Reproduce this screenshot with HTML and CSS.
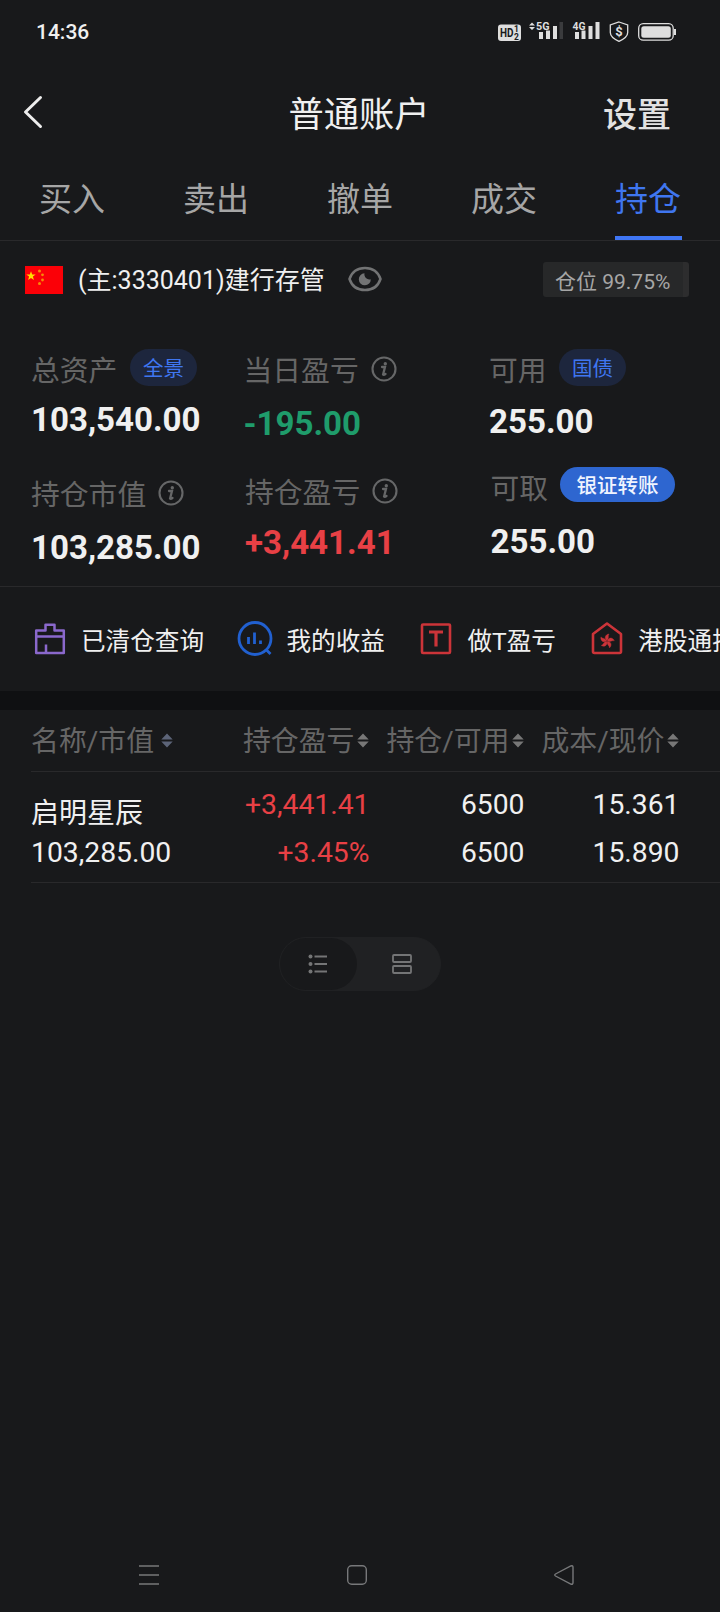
FILE: index.html
```html
<!DOCTYPE html>
<html lang="zh-CN">
<head>
<meta charset="utf-8">
<title>普通账户</title>
<link rel="stylesheet" href="styles.css">
</head>
<body>
<div class="screen">
  <div class="status">
    <span class="time">14:36</span>
    <svg class="status-icons" width="180" height="24" viewBox="0 0 180 24">
      <rect x="0" y="4.5" width="23" height="16.5" rx="3" fill="#dedede"/>
      <text class="hd" x="2" y="17.3" textLength="13.5" lengthAdjust="spacingAndGlyphs">HD</text>
      <text class="hd-sub" x="16" y="12.2">1</text>
      <text class="hd-sub" x="16" y="20">2</text>
      <path d="M31 5.4l3-3 3 3zM31 7l3 3 3-3z" fill="#dedede"/>
      <text class="net" x="38" y="9.6" textLength="13.5" lengthAdjust="spacingAndGlyphs">5G</text>
      <path d="M41 12h4v7h-4zM48 10.5h4v8.500h-4zM55 6h4v13h-4z" fill="#dedede"/>
      <path d="M61.500 2h3.500v17h-3.500z" fill="#3a3b3d"/>
      <text class="net" x="74.500" y="9.600" textLength="13" lengthAdjust="spacingAndGlyphs">4G</text>
      <path d="M77 12h4v7h-4zM83.500 10.500h4v8.500h-4zM90.500 6h4v13h-4zM97.500 2h4v17h-4z" fill="#dedede"/>
      <path d="M121 2l8.700 3v7.500c0 4-4.200 6.800-8.700 8.800c-4.500-2-8.700-4.800-8.700-8.800V5z" fill="none" stroke="#dedede" stroke-width="1.300"/>
      <text class="shield-sign" x="121" y="16" text-anchor="middle">$</text>
      <rect x="140.700" y="3.700" width="34.500" height="16.500" rx="4.500" fill="none" stroke="#dedede" stroke-width="1.300"/>
      <rect x="143.300" y="6.300" width="29.500" height="11.400" rx="2.500" fill="#dedede"/>
      <path d="M176 9h2v6h-2z" fill="#dedede"/>
    </svg>
  </div>

  <header class="topbar">
    <svg class="back" width="20" height="34" viewBox="0 0 20 34"><path d="M17.500 2.500L2.500 17L17.500 31.500" fill="none" stroke="#ededed" stroke-width="3" stroke-linecap="round" stroke-linejoin="round"/></svg>
    <h1 class="title">普通账户</h1>
    <span class="settings">设置</span>
  </header>

  <nav class="tabs">
    <div class="tab"><span>买入</span></div>
    <div class="tab"><span>卖出</span></div>
    <div class="tab"><span>撤单</span></div>
    <div class="tab"><span>成交</span></div>
    <div class="tab active"><span>持仓</span></div>
  </nav>

  <div class="account">
    <svg width="38" height="28" viewBox="0 0 38 28">
      <rect width="38" height="28" fill="#fb0007"/>
      <path d="M6 5.200l1.200 3.300h3.500l-2.800 2.100 1 3.400L6 12l-2.900 2 1-3.400L1.300 8.500h3.500z" fill="#ffde00"/>
      <g fill="#f78a08"><circle cx="14.500" cy="5" r="1.500"/><circle cx="17.500" cy="8.800" r="1.400"/><circle cx="17.500" cy="14" r="1.400"/><circle cx="14.500" cy="17.500" r="1.500"/></g>
    </svg>
    <span class="account-name">(主:3330401)建行存管</span>
    <svg class="eye" width="34" height="26" viewBox="0 0 34 26">
      <path d="M1.500 13C4 5.500 10 2 17 2s13 3.500 15.500 11C30 20.500 24 24 17 24S4 20.500 1.500 13z" fill="none" stroke="#727374" stroke-width="2.500"/>
      <path d="M16.500 7.300a5 5 0 0 0 6.300 5.900a6 6 0 1 1-6.300-5.900z" fill="#727374"/>
    </svg>
    <span class="position">仓位 99.75%</span>
  </div>

  <section class="summary">
    <div class="col col-a">
      <div class="label">总资产<span class="pill">全景</span></div>
      <div class="value">103,540.00</div>
      <div class="label">持仓市值<svg class="info" viewBox="0 0 26 26"><use href="#info"/></svg></div>
      <div class="value">103,285.00</div>
    </div>
    <div class="col col-b">
      <div class="label">当日盈亏<svg class="info" viewBox="0 0 26 26"><use href="#info"/></svg></div>
      <div class="value green">-195.00</div>
      <div class="label inset">持仓盈亏<svg class="info" viewBox="0 0 26 26"><use href="#info"/></svg></div>
      <div class="value red inset">+3,441.41</div>
    </div>
    <div class="col col-c">
      <div class="label">可用<span class="pill">国债</span></div>
      <div class="value">255.00</div>
      <div class="label inset">可取<span class="pill solid">银证转账</span></div>
      <div class="value inset">255.00</div>
    </div>
  </section>

  <section class="shortcuts">
    <div class="shortcut">
      <svg width="36" height="36" viewBox="0 0 36 36" fill="none" stroke="#8a68cc" stroke-width="2.500" stroke-linejoin="round"><path d="M4.200 9.500H13.500V3.700H22.500V9.500H31.800V32H4.200zM4.200 15.500H31.800M14 32V23.500"/></svg>
      <span>已清仓查询</span>
    </div>
    <div class="shortcut">
      <svg width="36" height="36" viewBox="0 0 36 36" fill="none" stroke="#2160d0" stroke-width="2.800"><circle cx="18" cy="17.500" r="16"/><path d="M29 28.500l4.500 4.500M11.500 16V23M17.500 11.500V23M23.500 19.500V23"/></svg>
      <span>我的收益</span>
    </div>
    <div class="shortcut">
      <svg width="36" height="36" viewBox="0 0 36 36" fill="none" stroke="#cc3439" stroke-width="2.600"><rect x="4" y="3.500" width="28" height="28.500" rx="1"/><path d="M11 11H25M18 11V25.500" stroke-width="3.200"/></svg>
      <span>做T盈亏</span>
    </div>
    <div class="shortcut">
      <svg width="36" height="36" viewBox="0 0 36 36"><path d="M18 2.500L32 13V30.500a1.500 1.500 0 0 1-1.500 1.500H5.500a1.500 1.500 0 0 1-1.500-1.500V13z" fill="none" stroke="#cc3439" stroke-width="2.600" stroke-linejoin="round"/>
        <g fill="#cc3439" stroke="#cc3439" stroke-width=".4" transform="translate(18 20)"><path id="petal" d="M0-.500C-3-2.500-2-6.500 2-7C.500-5 2.500-3 0-.500z"/><use href="#petal" transform="rotate(72)"/><use href="#petal" transform="rotate(144)"/><use href="#petal" transform="rotate(216)"/><use href="#petal" transform="rotate(288)"/></g></svg>
      <span>港股通持仓</span>
    </div>
  </section>

  <section class="holdings">
    <div class="row head">
      <div class="cell first">名称/市值<svg class="sort" viewBox="0 0 12 15"><use href="#sort"/></svg></div>
      <div class="cell">持仓盈亏<svg class="sort" viewBox="0 0 12 15"><use href="#sort"/></svg></div>
      <div class="cell">持仓/可用<svg class="sort" viewBox="0 0 12 15"><use href="#sort"/></svg></div>
      <div class="cell">成本/现价<svg class="sort" viewBox="0 0 12 15"><use href="#sort"/></svg></div>
    </div>
    <div class="row body">
      <div class="cell first"><span class="name">启明星辰</span><span>103,285.00</span></div>
      <div class="cell red"><span>+3,441.41</span><span>+3.45%</span></div>
      <div class="cell"><span>6500</span><span>6500</span></div>
      <div class="cell"><span>15.361</span><span>15.890</span></div>
    </div>
  </section>

  <div class="switch">
    <div class="option on"><svg width="20" height="20" viewBox="0 0 20 20"><g fill="#747576"><circle cx="2.500" cy="2.500" r="2"/><circle cx="2.500" cy="10" r="2"/><circle cx="2.500" cy="17.500" r="2"/></g><path d="M6.500 2.500h12.500M6.500 10h12.500M6.500 17.500h12.500" stroke="#747576" stroke-width="2"/></svg></div>
    <div class="option"><svg width="20" height="20" viewBox="0 0 20 20"><g fill="none" stroke="#747576" stroke-width="1.800"><rect x="1" y="1" width="18" height="7" rx="1"/><rect x="1" y="12" width="18" height="7" rx="1"/></g></svg></div>
  </div>

  <footer class="sysnav">
    <svg width="20" height="20" viewBox="0 0 20 20"><path d="M0 1h20M0 10h20M0 19h20" stroke="#77787a" stroke-width="1.700"/></svg>
    <svg width="20" height="20" viewBox="0 0 20 20"><rect x=".7" y=".7" width="18.600" height="18.600" rx="4" fill="none" stroke="#77787a" stroke-width="1.400"/></svg>
    <svg width="20" height="20" viewBox="0 0 20 20"><path d="M1.500 9L16.800 1q2.200-.8 2.200 1.400v15.200q0 2.200-2.200 1.400L1.500 11q-1.500-1 0-2z" fill="none" stroke="#77787a" stroke-width="1.400"/></svg>
  </footer>
</div>

<svg class="defs" width="0" height="0">
  <defs>
    <g id="info"><circle cx="13" cy="13" r="11.500" fill="none" stroke="#666768" stroke-width="2.100"/><circle cx="14.300" cy="7.700" r="1.700" fill="#666768"/><path d="M11 11h3l-1.900 7.500q.6.800 2.400-.5" fill="none" stroke="#666768" stroke-width="2.300" stroke-linecap="round"/></g>
    <g id="sort"><path d="M.3 6.400L6 .5l5.700 5.900zM.3 8.600L6 14.500l5.700-5.900z" fill="currentColor"/></g>
  </defs>
</svg>
</body>
</html>
```
FILE: styles.css
```css
* { box-sizing: border-box; }
body {
  margin: 0;
  background: #18191b;
  color: #f0f0f0;
  font-family: Roboto, "Noto Sans CJK SC", sans-serif;
}
svg { display: block; flex: none; }
.defs { position: absolute; }
.screen {
  display: flex;
  flex-direction: column;
  width: 720px;
  height: 1612px;
  overflow: hidden;
}

.status {
  display: flex;
  justify-content: space-between;
  align-items: center;
  height: 64px;
  padding: 0 42px 0 36px;
}
.time { font-size: 21px; font-weight: 500; }
.hd { font-size: 12px; font-weight: 700; fill: #18191b; }
.hd-sub { font-size: 8.5px; font-weight: 700; fill: #18191b; }
.net { font-size: 11.5px; font-weight: 700; fill: #dedede; }
.shield-sign { font-size: 13px; font-weight: 700; fill: #dedede; }

.topbar {
  display: grid;
  grid-template-columns: 200px 1fr 200px;
  align-items: center;
  height: 100px;
  padding: 2px 49px 0 23px;
  line-height: 50px;
}
.back { margin-bottom: 6px; }
.title { margin: 0 0 0 24px; text-align: center; font-size: 35.3px; font-weight: 400; white-space: nowrap; }
.settings { text-align: right; color: #e2e2e2; font-size: 34px; font-weight: 500; }

.tabs {
  display: grid;
  grid-template-columns: repeat(5, 1fr);
  height: 77px;
  border-bottom: 1px solid #29292b;
  font-size: 33px;
  color: #a6a6a6;
}
.tab { display: flex; justify-content: center; }
.tab span { width: 67px; height: 76px; line-height: 72px; text-align: center; }
.active span { color: #3f76f0; border-bottom: 4px solid #3f76f5; }

.account {
  display: flex;
  align-items: center;
  height: 79px;
  padding: 0 31px 2px 25px;
}
.account-name { margin-left: 15px; font-size: 25px; line-height: 40px; padding-top: 3px; }
.eye { margin: 0 0 1px 23px; }
.position {
  width: 146px;
  height: 35px;
  margin-left: auto;
  padding-left: 12px;
  border-right: 6px solid #2d2d2e;
  border-radius: 3px;
  background: #272829;
  color: #a6a6a6;
  font-size: 21px;
  line-height: 40px;
}

.summary {
  display: grid;
  grid-template-columns: 212.5px 245.5px 1fr;
  height: 267px;
  padding: 31px 0 0 31px;
  border-bottom: 1px solid #29292b;
}
.label { display: flex; align-items: center; height: 40px; color: #666; font-size: 28.8px; line-height: 42px; }
.value { height: 40px; font-size: 33.1px; font-weight: 700; line-height: 40px; }
.inset { padding-left: 1.5px; }
.col-a .value { margin: 9px 0 35px; }
.col-a .value:last-child { margin: 13px 0 0; }
.col-b .value { margin: 13px 0 29px; }
.col-b .value:last-child { margin: 10px 0 0; }
.col-c .value { margin: 11px 0 27px; }
.col-c .value:last-child { margin: 13px 0 0; }
.info { width: 26px; height: 26px; margin: 0 0 5px 12px; }
.pill {
  height: 37px;
  margin: 0 0 7px 12.5px;
  padding: 0 13px;
  border-radius: 19px;
  background: #1d263d;
  color: #3f76f0;
  font-size: 20.5px;
  line-height: 41px;
}
.solid {
  height: 35px;
  margin: 0 0 9px 12px;
  padding: 0 16.5px;
  background: #2e66d0;
  color: #f0f4ff;
  font-weight: 500;
  line-height: 39px;
}
.green { color: #1f9c6b; }
.red { color: #e84045; }

.shortcuts {
  display: flex;
  height: 104px;
  padding-left: 32px;
  overflow: hidden;
  font-size: 24.6px;
}
.shortcut { display: flex; align-items: center; flex: none; gap: 13px; margin-right: 33.5px; white-space: nowrap; }

.holdings { padding-top: 19px; background: #0f1012; }
.row {
  display: grid;
  grid-template-columns: 180px 158.5px 155px 155px;
  margin-left: 31px;
  border-bottom: 1px solid #29292b;
  box-shadow: -31px 0 #18191b;
  background: #18191b;
}
.head { height: 62px; font-size: 27.9px; line-height: 64px; color: #666; }
.head .cell { display: flex; align-items: center; justify-content: flex-end; white-space: nowrap; }
.head .first { justify-content: flex-start; }
.sort { width: 12px; height: 15px; margin: 0 1px 3px 2px; color: #777; }
.first .sort { margin-left: 7px; color: #5c6478; }
.body { height: 111px; padding-top: 9px; font-size: 28.3px; line-height: 48px; }
.body .cell { display: flex; flex-direction: column; align-items: flex-end; }
.body .first { align-items: flex-start; }
.name { height: 48px; padding-top: 9px; font-size: 28px; }

.switch {
  display: flex;
  align-self: center;
  width: 162px;
  height: 54px;
  margin-top: 54px;
  border: 1px solid #202123;
  border-radius: 27px;
  background: #202123;
}
.option { display: flex; flex: 1; align-items: center; justify-content: center; padding-left: 7px; }
.on { flex: none; width: 77px; padding: 0 2px 0 0; border-radius: 26px; background: #18191b; }

.sysnav { display: flex; justify-content: space-between; margin-top: auto; padding: 0 146px 27px 139px; }
```
